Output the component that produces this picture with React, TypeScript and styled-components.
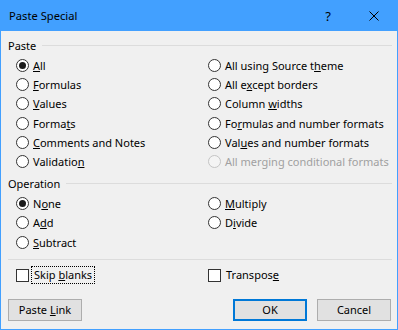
import React from "react";
import styled, { createGlobalStyle, css } from "styled-components";

const GlobalStyle = createGlobalStyle`
  html, body { margin: 0; padding: 0; background: #ffffff; }
  * { box-sizing: border-box; }
`;

const FONT = `"Noto Sans", "Open Sans", "DejaVu Sans", sans-serif`;
const ACCENT = "#42a0ff";

const Dialog = styled.div`
  width: 398px;
  height: 330px;
  background: #f0f0f0;
  border: 1px solid ${ACCENT};
  border-top: none;
  display: flex;
  flex-direction: column;
  font-family: ${FONT};
  font-size: 11px;
  color: #000;
`;

const TitleBar = styled.div`
  height: 31px;
  flex: none;
  background: ${ACCENT};
  display: flex;
  align-items: center;
`;

const TitleText = styled.div`
  flex: 1;
  padding-left: 8px;
  font-size: 11.2px;
`;

const CaptionButton = styled.div`
  width: 46px;
  height: 31px;
  display: flex;
  align-items: center;
  justify-content: center;
  font-size: 13px;
`;

const Content = styled.div`
  flex: 1;
  display: flex;
  flex-direction: column;
  padding: 7px 5px 8px 7px;
`;

const GroupHeader = styled.div<{ $top: number }>`
  display: flex;
  align-items: center;
  height: 15px;
  margin-top: ${(p) => p.$top}px;
  &::after {
    content: "";
    flex: 1;
    height: 1px;
    margin-left: 6px;
    background: #dcdcdc;
  }
`;

const OptionGrid = styled.div`
  display: grid;
  grid-template-columns: 192px 1fr;
  grid-auto-rows: 19.2px;
  padding-left: 8px;
  margin-top: 3px;
`;

const Option = styled.label<{ $disabled?: boolean }>`
  display: flex;
  align-items: center;
  gap: 4px;
  white-space: nowrap;
  color: ${(p) => (p.$disabled ? "#a0a0a0" : "#000")};
`;

const Radio = styled.span<{ $checked?: boolean; $disabled?: boolean }>`
  width: 13px;
  height: 13px;
  flex: none;
  border-radius: 50%;
  border: 1px solid ${(p) => (p.$disabled ? "#c4c4c4" : "#333333")};
  background: ${(p) => (p.$disabled ? "#f4f4f4" : "#ffffff")};
  display: flex;
  align-items: center;
  justify-content: center;
  ${(p) =>
    p.$checked &&
    css`
      &::after {
        content: "";
        width: 7px;
        height: 7px;
        border-radius: 50%;
        background: #1a1a1a;
      }
    `}
`;

const Separator = styled.div`
  height: 1px;
  background: #dcdcdc;
  margin-top: 7px;
`;

const CheckRow = styled.div`
  display: grid;
  grid-template-columns: 192px 1fr;
  height: 19px;
  padding-left: 8px;
  margin-top: 6px;
`;

const CheckBox = styled.span`
  width: 13px;
  height: 13px;
  flex: none;
  border: 1px solid #333333;
  background: #ffffff;
`;

const CheckOption = styled.label`
  display: flex;
  align-items: center;
  gap: 2px;
  white-space: nowrap;
`;

const CheckText = styled.span<{ $focused?: boolean }>`
  padding: 0 2px 1px;
  line-height: 15px;
  border: 1px dotted ${(p) => (p.$focused ? "#000" : "transparent")};
`;

const Footer = styled.div`
  margin-top: auto;
  display: flex;
  align-items: center;
  padding-right: 1px;
`;

const Button = styled.button<{ $default?: boolean }>`
  width: 74px;
  height: 22px;
  font-family: ${FONT};
  font-size: 11px;
  color: #000;
  background: #e1e1e1;
  border: 1px solid #adadad;
  padding: 0 0 1px;
  margin-left: 10px;
  ${(p) =>
    p.$default &&
    css`
      border: 2px solid #0078d7;
    `}
  &:first-child {
    margin-left: 0;
    margin-right: auto;
  }
`;

const Key = styled.span`
  text-decoration: underline;
  text-underline-offset: 1px;
`;

function Label({ text, k }: { text: string; k?: number }) {
  if (k === undefined) return <span>{text}</span>;
  return (
    <span>
      {text.slice(0, k)}
      <Key>{text[k]}</Key>
      {text.slice(k + 1)}
    </span>
  );
}

type Opt = { text: string; k?: number; checked?: boolean; disabled?: boolean };

const pasteOpts: Opt[] = [
  { text: "All", k: 0, checked: true },
  { text: "All using Source theme", k: 18 },
  { text: "Formulas", k: 0 },
  { text: "All except borders", k: 5 },
  { text: "Values", k: 0 },
  { text: "Column widths", k: 7 },
  { text: "Formats", k: 5 },
  { text: "Formulas and number formats", k: 2 },
  { text: "Comments and Notes", k: 0 },
  { text: "Values and number formats", k: 3 },
  { text: "Validation", k: 9 },
  { text: "All merging conditional formats", disabled: true },
];

const opOpts: (Opt | null)[] = [
  { text: "None", k: 1, checked: true },
  { text: "Multiply", k: 0 },
  { text: "Add", k: 1 },
  { text: "Divide", k: 1 },
  { text: "Subtract", k: 0 },
  null,
];

function OptionItem({ o }: { o: Opt }) {
  return (
    <Option $disabled={o.disabled}>
      <Radio $checked={o.checked} $disabled={o.disabled} />
      <Label text={o.text} k={o.k} />
    </Option>
  );
}

export default function App() {
  return (
    <>
      <GlobalStyle />
      <Dialog>
        <TitleBar>
          <TitleText>Paste Special</TitleText>
          <CaptionButton>?</CaptionButton>
          <CaptionButton>
            <svg width="10" height="10" viewBox="0 0 10 10">
              <path d="M0.5 0.5 L9.5 9.5 M9.5 0.5 L0.5 9.5" stroke="#000" strokeWidth="1" fill="none" />
            </svg>
          </CaptionButton>
        </TitleBar>
        <Content>
          <GroupHeader $top={0}>Paste</GroupHeader>
          <OptionGrid>
            {pasteOpts.map((o, i) => (
              <OptionItem key={i} o={o} />
            ))}
          </OptionGrid>
          <GroupHeader $top={5}>Operation</GroupHeader>
          <OptionGrid>
            {opOpts.map((o, i) => (o ? <OptionItem key={i} o={o} /> : <span key={i} />))}
          </OptionGrid>
          <Separator />
          <CheckRow>
            <CheckOption>
              <CheckBox />
              <CheckText $focused>
                <Label text="Skip blanks" k={5} />
              </CheckText>
            </CheckOption>
            <CheckOption>
              <CheckBox />
              <CheckText>
                <Label text="Transpose" k={8} />
              </CheckText>
            </CheckOption>
          </CheckRow>
          <Footer>
            <Button>
              <Label text="Paste Link" k={6} />
            </Button>
            <Button $default>OK</Button>
            <Button>Cancel</Button>
          </Footer>
        </Content>
      </Dialog>
    </>
  );
}
